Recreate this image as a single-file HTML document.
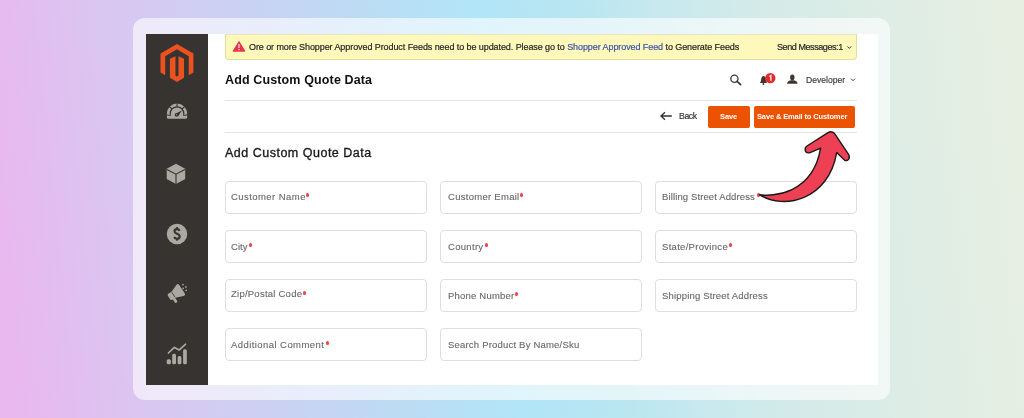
<!DOCTYPE html>
<html><head><meta charset="utf-8">
<style>
*{margin:0;padding:0;box-sizing:border-box}
html,body{width:1024px;height:418px;overflow:hidden}
body{position:relative;font-family:"Liberation Sans",sans-serif;
background:linear-gradient(84deg,#e8b8ef 22px,#d9c7f1 151px,#cbd1f3 276px,#bcdcf4 404px,#b1e5f7 519px,#b9e6f1 618px,#c9e9ee 708px,#d6ebe8 817px,#e7efe2 1040px);}
.abs{position:absolute}
#card{left:133px;top:18px;width:757px;height:382px;border-radius:12px;background:rgba(255,255,255,0.6)}
#main{left:146px;top:34px;width:732px;height:351px;background:#fff}
#side{left:146px;top:34px;width:62px;height:351px;background:#373330}
#notice{left:225px;top:34px;width:632px;height:25.5px;background:#fef9bb;border:1px solid #e2dca0;border-top-color:#e6e3c8;border-radius:0 0 4px 4px}
.t{position:absolute;white-space:nowrap;line-height:1;will-change:transform}
.hline{position:absolute;left:225px;width:632px;height:1px;background:#e3e3e3}
.btn{position:absolute;background:#eb5202;border-radius:2px}
.fld{position:absolute;width:202px;height:33px;border:1px solid #dedede;border-radius:4px}
.lbl{position:absolute;font-size:9.5px;color:#686868;-webkit-text-stroke:0.12px #686868;white-space:nowrap;line-height:1;will-change:transform}
.ast{position:absolute;width:3.2px;height:3.2px;border-radius:50%;background:#f3434c;margin-top:-0.6px}
svg{position:absolute;left:0;top:0;overflow:visible}
</style></head><body>
<div id="card" class="abs"></div>
<div id="main" class="abs"></div>
<div id="side" class="abs"></div>
<div id="notice" class="abs"></div>

<div class="t" style="left:249px;top:43px;font-size:9px;letter-spacing:-0.08px;color:#262626;-webkit-text-stroke:0.2px #262626">Ore or more Shopper Approved Product Feeds need to be updated. Please go to <span style="color:#3a53a6;-webkit-text-stroke:0.2px #3a53a6">Shopper Approved Feed</span> to Generate Feeds</div>
<div class="t" style="left:777px;top:43px;font-size:9px;letter-spacing:-0.42px;color:#262626;-webkit-text-stroke:0.2px #262626">Send Messages:1</div>

<div class="t" style="left:225px;top:74px;font-size:12.5px;letter-spacing:0.13px;font-weight:bold;color:#111">Add Custom Quote Data</div>
<div class="t" style="left:806px;top:76px;font-size:8.6px;color:#383838;-webkit-text-stroke:0.15px #383838">Developer</div>

<div class="hline" style="top:100px"></div>
<div class="hline" style="top:132px"></div>

<div class="t" style="left:679px;top:112px;font-size:8.7px;letter-spacing:-0.39px;color:#3a3a3a;-webkit-text-stroke:0.2px #3a3a3a">Back</div>
<div class="btn" style="left:708px;top:106px;width:42px;height:22px"></div>
<div class="btn" style="left:754px;top:106px;width:101px;height:22px"></div>
<div class="t" style="left:720px;top:113px;font-size:7.5px;letter-spacing:-0.08px;font-weight:bold;color:#fff">Save</div>
<div class="t" style="left:757px;top:113px;font-size:7.5px;letter-spacing:-0.13px;font-weight:bold;color:#fff">Save &amp; Email to Customer</div>

<div class="t" style="left:225px;top:147px;font-size:12.5px;letter-spacing:0.5px;color:#1a1a1a;-webkit-text-stroke:0.35px #1a1a1a">Add Custom Quote Data</div>

<div class="fld" style="left:225px;top:181px"></div>
<div class="fld" style="left:440px;top:181px"></div>
<div class="fld" style="left:655px;top:181px"></div>
<div class="fld" style="left:225px;top:230.3px"></div>
<div class="fld" style="left:440px;top:230.3px"></div>
<div class="fld" style="left:655px;top:230.3px"></div>
<div class="fld" style="left:225px;top:279.3px"></div>
<div class="fld" style="left:440px;top:279.3px"></div>
<div class="fld" style="left:655px;top:279.3px"></div>
<div class="fld" style="left:225px;top:328.4px"></div>
<div class="fld" style="left:440px;top:328.4px"></div>

<div class="lbl" style="left:231px;top:191.5px;letter-spacing:0.44px">Customer Name</div>
<div class="lbl" style="left:448px;top:191.5px;letter-spacing:0.28px">Customer Email</div>
<div class="lbl" style="left:662px;top:191.5px;letter-spacing:0.12px">Billing Street Address</div>
<div class="lbl" style="left:231px;top:241.5px;letter-spacing:0.06px">City</div>
<div class="lbl" style="left:448px;top:241.5px;letter-spacing:0.31px">Country</div>
<div class="lbl" style="left:662px;top:241.5px;letter-spacing:0.30px">State/Province</div>
<div class="lbl" style="left:231px;top:289px;letter-spacing:0.24px">Zip/Postal Code</div>
<div class="lbl" style="left:448px;top:290.5px;letter-spacing:0.21px">Phone Number</div>
<div class="lbl" style="left:662px;top:290.5px;letter-spacing:0.17px">Shipping Street Address</div>
<div class="lbl" style="left:231px;top:339.5px;letter-spacing:0.43px">Additional Comment</div>
<div class="lbl" style="left:448px;top:339.5px;letter-spacing:0.20px">Search Product By Name/Sku</div>

<div class="ast" style="left:306px;top:194px"></div>
<div class="ast" style="left:520px;top:194px"></div>
<div class="ast" style="left:757px;top:194px"></div>
<div class="ast" style="left:249px;top:244px"></div>
<div class="ast" style="left:485px;top:244px"></div>
<div class="ast" style="left:729px;top:244px"></div>
<div class="ast" style="left:303px;top:292px"></div>
<div class="ast" style="left:515px;top:293px"></div>
<div class="ast" style="left:326px;top:342px"></div>

<svg width="1024" height="418" viewBox="0 0 1024 418">
  <!-- Magento logo -->
  <g transform="translate(160.5,43.9) scale(1.585,1.585)" fill="#ec5220">
    <path d="M12 24L7.545 21.428V9.428L11.05 7.75V20.0L12 20.57L12.95 20.0V7.75L16.456 9.428V21.428ZM22.391 6v12l-2.969 1.714V7.713L12 3.43 4.574 7.713v12.001L1.609 18V6L12 0l10.391 6z" transform="translate(-1.609,0)"/>
  </g>
  <!-- warning triangle -->
  <path d="M239 41.7 L244.7 51.1 L233.3 51.1 Z" fill="#e8344e" stroke="#e8344e" stroke-width="1.1" stroke-linejoin="round"/>
  <rect x="238.4" y="44" width="1.2" height="4" fill="#fde"/>
  <rect x="238.4" y="49" width="1.2" height="1.2" fill="#fde"/>
  <!-- send messages chevron -->
  <path d="M847.3 46.4 L849.3 48.4 L851.3 46.4" fill="none" stroke="#333" stroke-width="0.95"/>
  <!-- search -->
  <circle cx="734.4" cy="78.7" r="3.6" fill="none" stroke="#41362f" stroke-width="1.3"/>
  <path d="M737 81.3 L740.6 84.6" stroke="#41362f" stroke-width="1.7" stroke-linecap="round"/>
  <!-- bell -->
  <path d="M759.8 83 C760.8 82 761 80.5 761.2 79 C761.5 76.8 762.5 75.9 763.5 75.9 C764.5 75.9 765.5 76.8 765.8 79 C766 80.5 766.2 82 767.2 83 Z" fill="#41362f"/>
  <circle cx="763.4" cy="84" r="0.9" fill="#41362f"/>
  <circle cx="770.3" cy="78.1" r="5.2" fill="#e22b2b"/>
  <path d="M769.4 76.6 L770.9 75.6 L770.9 80.8" fill="none" stroke="#fff" stroke-width="1.2"/>
  <!-- user -->
  <ellipse cx="792.3" cy="77.4" rx="2.2" ry="2.8" fill="#41362f"/>
  <path d="M787 83.7 C787.3 81.5 789 80.6 790.6 80.2 L794 80.2 C795.6 80.6 797.3 81.5 797.6 83.7 Z" fill="#41362f"/>
  <!-- developer chevron -->
  <path d="M851 78.7 L853 80.7 L855 78.7" fill="none" stroke="#333" stroke-width="0.95"/>
  <!-- back arrow -->
  <path d="M671.8 116 L661.5 116 M665 112.3 L661 116 L665 119.7" fill="none" stroke="#303030" stroke-width="1.3"/>

  <!-- sidebar icons -->
  <g fill="#aba7a1">
    <!-- gauge -->
    <path d="M166.9 113.6 A10.1 10.1 0 0 1 187.1 113.6 L187.1 117.2 Q187.1 118.8 185.5 118.8 L168.5 118.8 Q166.9 118.8 166.9 117.2 Z"/>
    <!-- cube -->
    <path d="M176 163.8 L185.2 168.8 L185.2 179 L176 183.9 L166.7 179 L166.7 168.8 Z"/>
    <!-- dollar circle -->
    <circle cx="177" cy="234" r="10.25"/>
    <!-- chart bars -->
    <rect x="166.7" y="359.3" width="4.2" height="5" rx="1.5"/>
    <rect x="172.2" y="353.8" width="3.8" height="10.5" rx="1.5"/>
    <rect x="177.6" y="355.9" width="3.8" height="8.4" rx="1.5"/>
    <rect x="183.1" y="349.2" width="3.7" height="15.1" rx="1.5"/>
  </g>
  <!-- gauge details -->
  <g stroke="#373330" fill="none">
    <path d="M170.2 116 L170.2 113.6 A6.8 6.8 0 0 1 183.8 113.6 L183.8 116" stroke-width="1.2"/>
    <path d="M177 102.5 L177 107 M168.6 105.9 L172 109 M185.4 105.9 L182 109" stroke-width="1.1"/>
    <path d="M166.5 114.6 L169.6 115.6 M187.5 114.6 L184.4 115.6" stroke-width="1"/>
  </g>
  <path d="M175.3 114 L182 110.2 L178.2 116.2 Z" fill="#373330"/>
  <circle cx="176.6" cy="114.8" r="1.9" fill="#373330"/>
  <circle cx="176.6" cy="114.8" r="0.6" fill="#aba7a1"/>
  <!-- cube details -->
  <path d="M167 169.6 L176 174.2 L184.9 169.6 M176 174.2 L176 183.9" stroke="#373330" stroke-width="1.1" fill="none"/>
  <!-- dollar -->
  <path d="M179.6 230.9 C179.1 229.7 178.2 229.1 177 229.1 C175.5 229.1 174.5 230 174.5 231.3 C174.5 234.2 179.7 233.2 179.7 236.4 C179.7 237.8 178.6 238.7 177 238.7 C175.6 238.7 174.7 238.1 174.2 237" stroke="#373330" stroke-width="2.1" fill="none"/>
  <path d="M177 226.9 L177 229.5 M177 238.3 L177 240.7" stroke="#373330" stroke-width="1.7" fill="none"/>
  <!-- megaphone -->
  <g transform="translate(177,292.4) rotate(-33) scale(0.92)" fill="#aba7a1">
    <path d="M-8.8 -3.9 L-4.5 -3.9 L3.8 -7.1 Q6.4 -8.1 6.4 -5.4 L6.4 5.4 Q6.4 8.1 3.8 7.1 L-4.5 3.9 L-8.8 3.9 Q-10.3 3.9 -10.3 2.4 L-10.3 -2.4 Q-10.3 -3.9 -8.8 -3.9 Z"/>
    <rect x="-8" y="3" width="3.1" height="6" rx="1.3"/>
    <path d="M-4.6 -3.2 L-4.6 3.2" stroke="#373330" stroke-width="0.8"/>
  </g>
  <g fill="#aba7a1">
    <circle cx="183" cy="284.6" r="0.85"/>
    <circle cx="185.9" cy="286.9" r="0.85"/>
    <circle cx="183.1" cy="288.3" r="0.85"/>
    <circle cx="186.2" cy="290.3" r="0.85"/>
  </g>
  <!-- chart line -->
  <path d="M168.4 353 L174.3 347.4 L179.3 349.9 L185.6 344.2" fill="none" stroke="#aba7a1" stroke-width="1.7" stroke-linejoin="round" stroke-linecap="round"/>

  <!-- big red arrow -->
  <path d="M759.5 194.6 C772.2 196.9 812.8 194.3 820.6 148.1 L809.5 152.8 Q804.6 153.2 805.2 148.6 Q805.5 147 807 146 L828 132.6 Q831.5 130.6 834.6 133.6 L848.4 154.2 Q850.6 158.2 847.6 160.2 Q845.8 161.2 844.4 159.9 L836.7 152.6 C828.5 200.2 783.5 210.3 759.5 194.6 Z" fill="#ee4054" stroke="#1a1a1a" stroke-width="1.4" stroke-linejoin="round"/>
</svg>
</body></html>
